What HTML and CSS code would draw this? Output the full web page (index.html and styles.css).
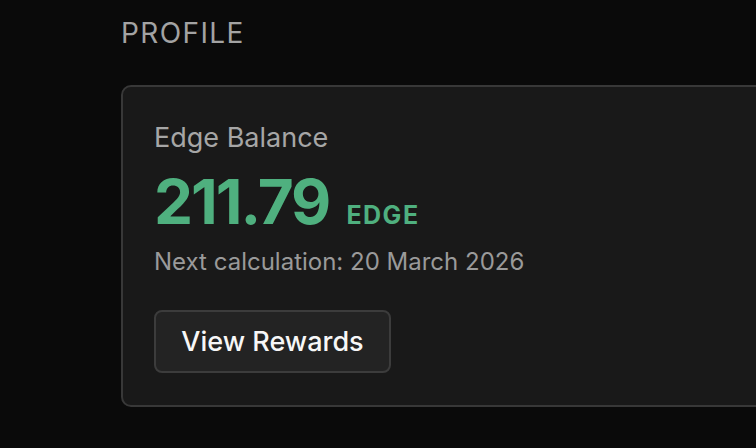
FILE: index.html
```html
<!DOCTYPE html>
<html lang="en">
<head>
  <meta charset="UTF-8" />
  <meta name="viewport" content="width=device-width, initial-scale=1.0"/>
  <title>Profile</title>
  <link rel="stylesheet" href="styles.css">
</head>
<body>
  <div class="page">
    <h2 class="section-title">PROFILE</h2>
    <div class="card">
      <div class="label">Edge Balance</div>
      <div class="balance">
        <span class="amount">211.79</span>
        <span class="unit">EDGE</span>
      </div>
      <p class="next">Next calculation: 20 March 2026</p>
      <button class="btn">View Rewards</button>
    </div>
  </div>
</body>
</html>
```

FILE: styles.css
```css
html, body {
  margin: 0;
  background: #0a0a0a;
  overflow: hidden;
}
body {
  font-family: 'Inter', 'Noto Sans', sans-serif;
  color: #fff;
}
.page {
  padding: 16px 0 0 121px;
}
.section-title {
  margin: 0;
  font-size: 28px;
  line-height: 34px;
  font-weight: 400;
  letter-spacing: 1.4px;
  color: #a3a3a3;
}
.card {
  margin-top: 35px;
  width: 700px;
  box-sizing: border-box;
  background: #191919;
  border: 2px solid #383838;
  border-radius: 10px;
  padding: 35px 31px 32px;
}
.label {
  font-size: 27px;
  line-height: 32px;
  color: #a6a6a6;
}
.balance {
  display: flex;
  align-items: baseline;
  gap: 17px;
  margin-top: 13px;
  color: #4fb07f;
  font-weight: 700;
}
.amount {
  font-size: 62px;
  line-height: 70px;
  letter-spacing: -2px;
}
.unit {
  font-size: 25px;
  letter-spacing: 1.5px;
}
.next {
  margin: 10px 0 0;
  font-size: 24px;
  line-height: 30px;
  color: #9a9a9a;
}
.btn {
  display: block;
  margin-top: 33px;
  width: 237px;
  height: 63px;
  background: #232323;
  border: 2px solid #3c3c3c;
  border-radius: 8px;
  color: #f7f7f7;
  font-family: inherit;
  font-size: 27px;
  font-weight: 500;
  cursor: pointer;
}
```
